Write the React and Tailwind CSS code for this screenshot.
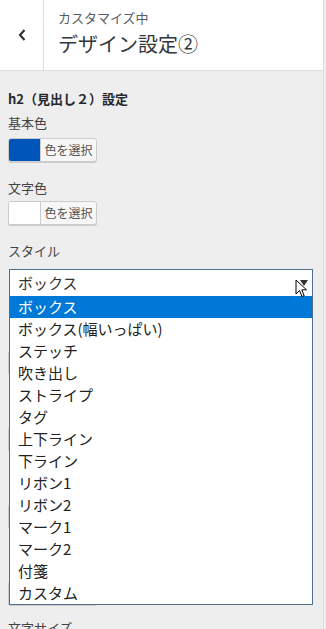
import React from "react";

const jp = { fontFamily: '"Noto Sans CJK JP", "Noto Sans", sans-serif' };

function ColorButton({ color, label = true }) {
  return (
    <div className="flex h-[24px] w-[89px] rounded-[3px] border border-[#cccccc] bg-[#f7f7f7] shadow-[0_1px_0_#cccccc] overflow-hidden">
      <div className="w-[31px] h-full" style={{ background: color }} />
      <div className="flex-1 border-l border-[#cccccc] flex items-center justify-center text-[12px] text-[#555555]">
        {label ? "色を選択" : null}
      </div>
    </div>
  );
}

const items = [
  "ボックス(幅いっぱい)",
  "ステッチ",
  "吹き出し",
  "ストライプ",
  "タグ",
  "上下ライン",
  "下ライン",
  "リボン1",
  "リボン2",
  "マーク1",
  "マーク2",
  "付箋",
  "カスタム",
];

export default function App() {
  return (
    <div className="w-[326px] h-[629px] bg-[#eeeeee] overflow-hidden" style={jp}>
      <div className="w-[324px] h-full border-r border-[#dddddd] relative">
        <div className="h-[71px] bg-white border-b border-[#dddddd] flex">
          <div className="w-[44px] border-r border-[#dddddd] flex items-center justify-center">
            <svg width="10" height="14" viewBox="0 0 10 14">
              <path d="M7.5 2 L3 7 L7.5 12" fill="none" stroke="#333" strokeWidth="2.2" />
            </svg>
          </div>
          <div className="pl-[14px] pt-[9px]">
            <div className="text-[13px] leading-[18px] text-[#555d66]">カスタマイズ中</div>
            <div className="text-[20px] leading-[28px] text-[#32373c] mt-[3px]">デザイン設定②</div>
          </div>
        </div>
        <div className="px-[8px] pt-[18px] text-[#444444]">
          <div className="text-[13px] font-bold leading-[20px] text-[#23282d]">h2（見出し２）設定</div>
          <div className="text-[13px] leading-[18px] mt-[5px]">基本色</div>
          <div className="mt-[6px]"><ColorButton color="#0055bb" /></div>
          <div className="text-[13px] leading-[18px] mt-[17px]">文字色</div>
          <div className="mt-[4px]"><ColorButton color="#ffffff" /></div>
          <div className="text-[13px] leading-[18px] mt-[17px]">スタイル</div>
          <div className="mt-[9px] ml-[1px] w-[304px] h-[28px] bg-white border border-[#4f6f8f] flex items-center justify-between pl-[8px] pr-[4px]">
            <span className="text-[15px] text-[#333333]">ボックス</span>
            <svg width="8" height="6" viewBox="0 0 8 6"><path d="M0 0 H8 L4 6 Z" fill="#333" /></svg>
          </div>
          <div className="mt-[53px]"><ColorButton color="#cccccc" label={false} /></div>
          <div className="mt-[53px]"><ColorButton color="#f5f5f5" label={false} /></div>
          <div className="mt-[53px]"><ColorButton color="#ffffff" label={false} /></div>
          <div className="mt-[53px]"><ColorButton color="#ffffff" label={false} /></div>
          <div className="mt-[14px] text-[13px] leading-[18px]">文字サイズ</div>
        </div>
        <div className="absolute left-[9px] top-[296px] w-[304px] bg-white border border-[#4f6f8f] border-t-0 text-[15px] text-[#222222]">
          <div className="h-[22px] bg-[#0078d7] text-white pl-[8px] leading-[22px]">ボックス</div>
          {items.map((t) => (
            <div key={t} className="h-[22px] pl-[8px] leading-[22px]">{t}</div>
          ))}
        </div>
        <svg className="absolute left-[295px] top-[279px]" width="13" height="20" viewBox="0 0 13 20">
          <path d="M1 1 L1 15 L4.5 11.5 L7 17.5 L9.2 16.6 L6.8 10.8 L11.5 10.8 Z" fill="#fff" stroke="#000" strokeWidth="1" />
        </svg>
      </div>
    </div>
  );
}
